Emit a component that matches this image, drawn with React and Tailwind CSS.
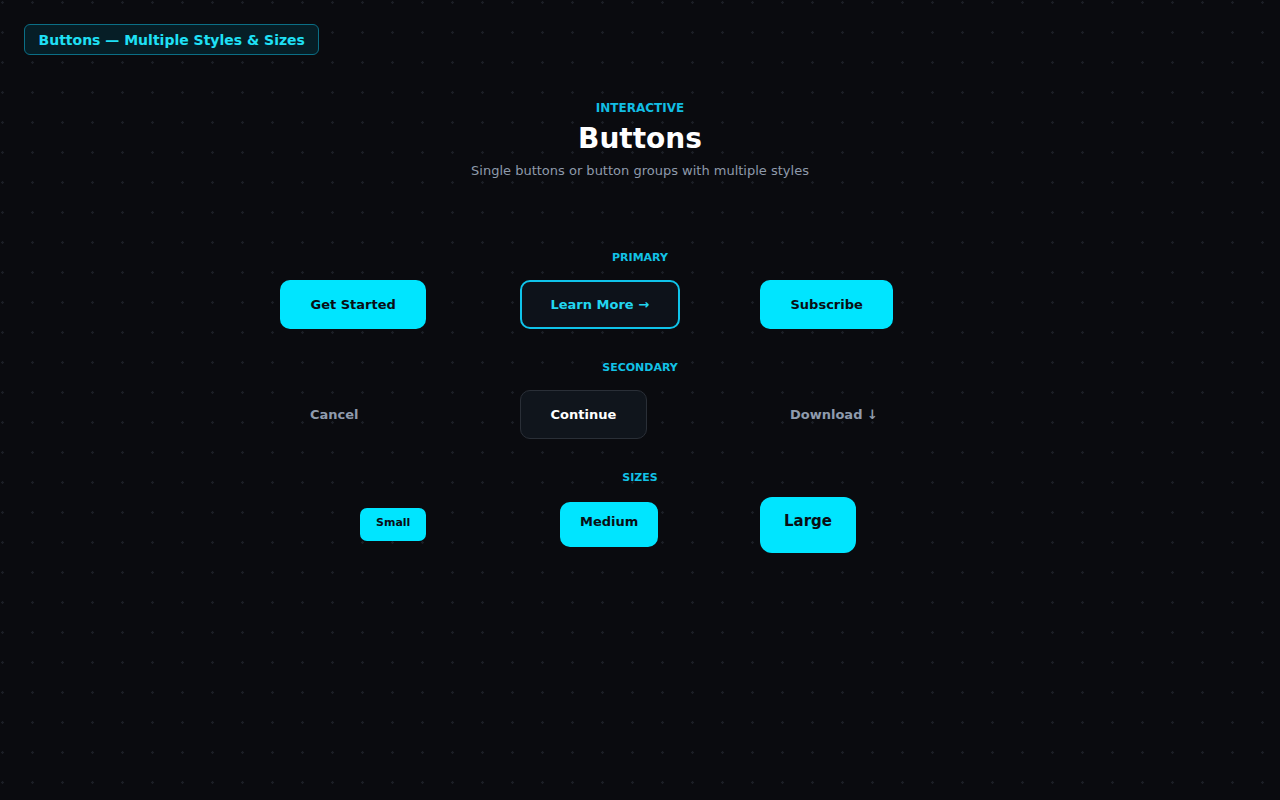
export default function App() {
  const primary =
    "flex h-[49px] items-center rounded-[10px] bg-[#00e5ff] px-[30.5px] text-[13px] font-bold leading-5 text-[#0a0e14]";
  const label = "pt-[1px] text-center text-[11px] font-bold leading-4 text-[#12c2e6]";
  const row = "grid h-[49px] grid-cols-3 grid-rows-[49px]";
  const cell = "flex h-[49px] items-center";

  return (
    <div className="min-h-[800px] w-full bg-[#0a0b0f] bg-[radial-gradient(circle_at_2.5px_2.5px,#1b1e25_1px,transparent_1.5px)] bg-[size:30px_30px] font-['DejaVu_Sans',sans-serif]">
      <div className="px-6 pt-6">
        <div className="inline-flex h-[31px] items-center rounded-md border border-[#0b6f86] bg-[#061e26] px-[13.5px] text-[14px] font-bold leading-5 text-[#1fe0f5]">
          Buttons — Multiple Styles &amp; Sizes
        </div>
      </div>

      <header className="mt-[45px] flex flex-col items-center">
        <div className="text-[12px] font-bold leading-4 text-[#12bde3]">INTERACTIVE</div>
        <h1 className="mt-[6px] text-[28px] font-bold leading-[34px] text-white">Buttons</h1>
        <p className="mt-[5px] text-[13px] leading-5 text-[#8e9aab]">
          Single buttons or button groups with multiple styles
        </p>
      </header>

      <main className="mx-auto mt-[68px] flex w-[720px] flex-col gap-[30px]">
        <section className="flex flex-col gap-[14px]">
          <div className={label}>PRIMARY</div>
          <div className={row}>
            <div className={cell}>
              <button className={primary}>Get Started</button>
            </div>
            <div className={cell}>
              <button className="flex h-[49px] items-center rounded-[10px] border-2 border-[#0fc3ea] bg-[#0d121a] px-[28.5px] text-[13px] font-bold leading-5 text-[#22d6f0]">
                Learn More →
              </button>
            </div>
            <div className={cell}>
              <button className={primary}>Subscribe</button>
            </div>
          </div>
        </section>

        <section className="flex flex-col gap-[14px]">
          <div className={label}>SECONDARY</div>
          <div className={row}>
            <div className={cell}>
              <button className="flex h-[49px] items-center px-[30px] text-[13px] font-bold leading-5 text-[#8f9bad]">
                Cancel
              </button>
            </div>
            <div className={cell}>
              <button className="flex h-[49px] items-center rounded-[10px] border border-[#2a2f37] bg-[#10151c] px-[29.5px] text-[13px] font-bold leading-5 text-white">
                Continue
              </button>
            </div>
            <div className={cell}>
              <button className="flex h-[49px] items-center px-[30px] text-[13px] font-bold leading-5 text-[#8f9bad]">
                Download ↓
              </button>
            </div>
          </div>
        </section>

        <section className="flex flex-col gap-[14px]">
          <div className={label}>SIZES</div>
          <div className={row}>
            <div className={`${cell} pl-[80px]`}>
              <button className="h-[33px] shrink-0 rounded-[7px] bg-[#00e5ff] px-4 pt-[7px] pb-[10px] text-[11px] font-bold leading-4 text-[#0a0e14]">
                Small
              </button>
            </div>
            <div className={`${cell} pl-[40px]`}>
              <button className="h-[45px] shrink-0 rounded-[10px] bg-[#00e5ff] px-5 pt-[10px] pb-[15px] text-[13px] font-bold leading-5 text-[#0a0e14]">
                Medium
              </button>
            </div>
            <div className={cell}>
              <button className="h-[56px] shrink-0 rounded-[12px] bg-[#00e5ff] px-6 pt-[13px] pb-[21px] text-[15px] font-bold leading-[22px] text-[#0a0e14]">
                Large
              </button>
            </div>
          </div>
        </section>
      </main>
    </div>
  );
}
